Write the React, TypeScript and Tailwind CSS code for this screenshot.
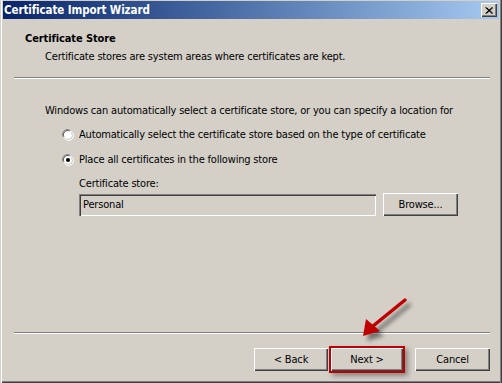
import React from "react";

const font = { fontFamily: '"DejaVu Sans Condensed", "DejaVu Sans", "Liberation Sans", sans-serif' };

function Radio({ checked }: { checked?: boolean }) {
  return (
    <svg width="12" height="12" viewBox="0 0 12 12" className="shrink-0">
      <path d="M1.5 8.5 A5 5 0 0 1 8.5 1.5" fill="none" stroke="#808080" strokeWidth="1" />
      <path d="M2.8 8.2 A3.8 3.8 0 0 1 8.2 2.8" fill="none" stroke="#404040" strokeWidth="1" />
      <circle cx="6" cy="6" r="4" fill="#ffffff" />
      <path d="M8.5 1.5 A5 5 0 0 1 1.5 8.5" fill="none" stroke="#ffffff" strokeWidth="1" />
      <path d="M10.5 3.5 A5 5 0 0 1 3.5 10.5" fill="none" stroke="#ffffff" strokeWidth="1" />
      <path d="M9.2 3.8 A3.8 3.8 0 0 1 3.8 9.2" fill="none" stroke="#D4D0C8" strokeWidth="1" />
      {checked && <circle cx="6" cy="6" r="2" fill="#000" />}
    </svg>
  );
}

function Btn({ children, w = "w-[75px]" }: { children: React.ReactNode; w?: string }) {
  return (
    <div
      className={`${w} h-[23px] flex items-center justify-center bg-[#D4D0C8] text-[11px] text-black shadow-[inset_1px_1px_0_#ffffff,inset_-1px_-1px_0_#404040,inset_-2px_-2px_0_#808080]`}
    >
      {children}
    </div>
  );
}

export default function App() {
  return (
    <div
      style={font}
      className="relative w-[502px] h-[383px] overflow-hidden bg-[#D4D0C8] text-[11px] leading-[13px] tracking-[-0.18px] text-black flex flex-col shadow-[inset_1px_0_0_#D4D0C8,inset_2px_0_0_#ffffff,inset_-1px_0_0_#404040,inset_-2px_0_0_#808080,inset_0_-1px_0_#404040,inset_0_-2px_0_#808080]"
    >
      {/* title bar */}
      <div className="mt-[1px] mx-[3px] h-[18px] flex items-center justify-between bg-gradient-to-r from-[#0A246A] to-[#A6CAF0] pl-[1px] pr-[2px]">
        <span className="text-white font-bold text-[11.5px] tracking-[-0.1px]">Certificate Import Wizard</span>
        <div className="w-[16px] h-[14px] flex items-center justify-center bg-[#D4D0C8] shadow-[inset_1px_1px_0_#ffffff,inset_-1px_-1px_0_#404040,inset_-2px_-2px_0_#808080]">
          <svg width="8" height="7" viewBox="0 0 8 7">
            <path d="M0.5 0.5 L7 6.5 M1.5 0.5 L8 6.5 M7 0.5 L0.5 6.5 M8 0.5 L1.5 6.5" stroke="#000" strokeWidth="1" />
          </svg>
        </div>
      </div>

      {/* header */}
      <div className="pl-[25px] mt-[13px] font-bold tracking-[-0.1px]">Certificate Store</div>
      <div className="pl-[45px] mt-[5px]">Certificate stores are system areas where certificates are kept.</div>
      <div className="ml-[14px] mr-[12px] mt-[14px] h-[2px] border-t border-t-[#808080] border-b border-b-[#ffffff]" />

      {/* body */}
      <div className="pl-[45px] mt-[25px]">Windows can automatically select a certificate store, or you can specify a location for</div>
      <div className="pl-[62px] mt-[11px] flex items-center gap-[5px]">
        <Radio />
        <span>Automatically select the certificate store based on the type of certificate</span>
      </div>
      <div className="pl-[62px] mt-[12px] flex items-center gap-[5px]">
        <Radio checked />
        <span>Place all certificates in the following store</span>
      </div>
      <div className="pl-[79px] mt-[11px]">Certificate store:</div>
      <div className="pl-[79px] mt-[3px] flex items-center gap-[7px]">
        <div className="w-[297px] h-[22px] flex items-center pl-[4px] shadow-[inset_1px_1px_0_#808080,inset_2px_2px_0_#404040,inset_-1px_-1px_0_#ffffff,inset_-2px_-2px_0_#D4D0C8]">
          Personal
        </div>
        <Btn>Browse...</Btn>
      </div>

      <div className="flex-1" />

      {/* bottom */}
      <div className="ml-[14px] mr-[12px] h-[2px] border-t border-t-[#808080] border-b border-b-[#ffffff]" />
      <div className="mt-[12px] mb-[10px] pr-[12px] flex items-center justify-end">
        <Btn w="w-[74px]">&lt; Back</Btn>
        <div className="ml-[1px] border-2 border-[#C00000] shadow-[3px_3px_5px_rgba(0,0,0,0.35)]">
          <Btn w="w-[72px]">Next &gt;</Btn>
        </div>
        <div className="ml-[10px]">
          <Btn>Cancel</Btn>
        </div>
      </div>

      {/* annotation arrow */}
      <svg className="absolute left-0 top-0 pointer-events-none" width="502" height="383" viewBox="0 0 502 383">
        <defs>
          <filter id="blur" x="-20%" y="-20%" width="140%" height="140%">
            <feGaussianBlur stdDeviation="2" />
          </filter>
        </defs>
        <g transform="translate(4,5)" filter="url(#blur)" opacity="0.45">
          <path d="M405 300 L373 326" stroke="#000" strokeWidth="4" strokeLinecap="round" />
          <path d="M363 336 L366 320 L380 331 Z" fill="#000" />
        </g>
        <path d="M405 300 L373 326" stroke="#C00000" strokeWidth="3.5" strokeLinecap="round" />
        <path d="M363 336 L366 319 L380 331 Z" fill="#C00000" />
      </svg>
    </div>
  );
}
